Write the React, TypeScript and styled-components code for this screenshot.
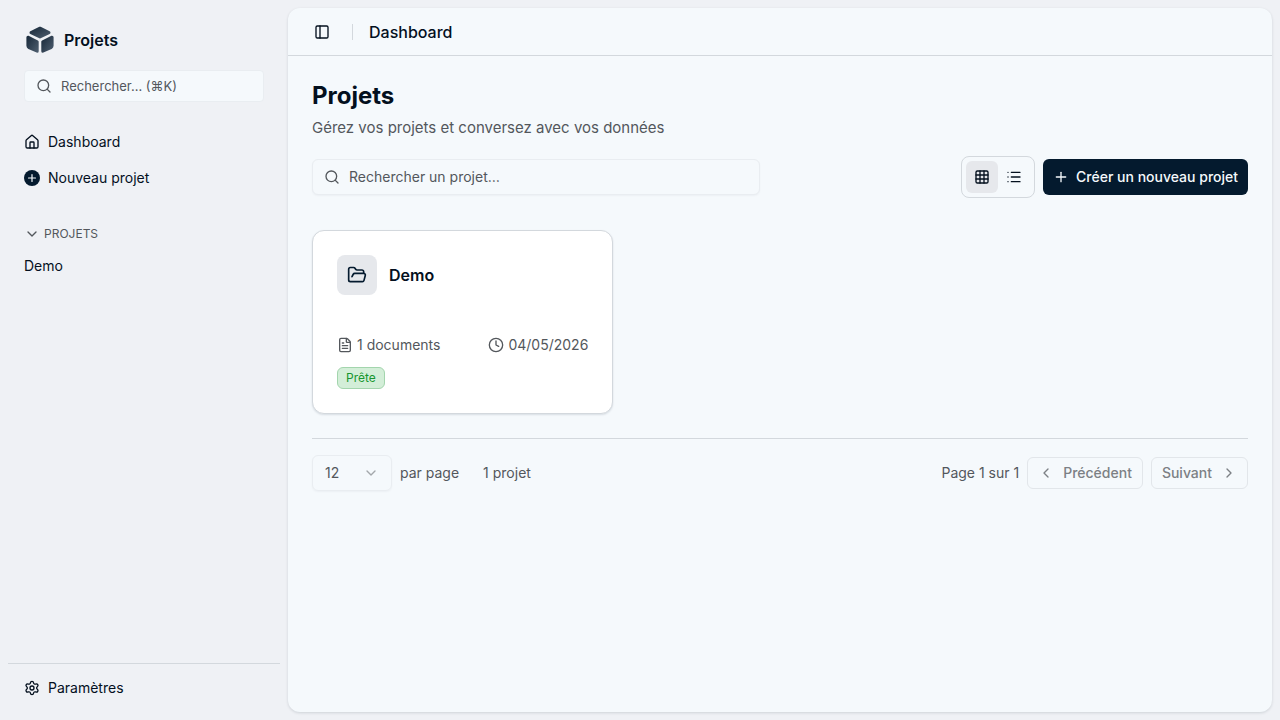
import React from "react";
import styled, { createGlobalStyle, css } from "styled-components";
import {
  ChevronDown, ChevronLeft, ChevronRight, Clock, FileText, FolderOpen,
  Grid3x3, House, List, PanelLeft, Plus, Search, Settings,
} from "lucide-react";

const color = {
  canvas: "#eff1f5",
  surface: "#f5f9fc",
  ink: "#04101e",
  primary: "#041a2e",
  muted: "#53575c",
  line: "#d3d8dd",
  faint: "#e9edf1",
  tint: "#e6e8ec",
};

const GlobalStyle = createGlobalStyle`
  *, *::before, *::after { box-sizing: border-box; }
  body {
    margin: 0;
    background: ${color.canvas};
    color: ${color.ink};
    font: 400 14px/20px Inter, "Liberation Sans", sans-serif;
  }
  button, input, select { font: inherit; color: inherit; margin: 0; }
  button { cursor: pointer; }
  a { color: inherit; text-decoration: none; }
  h1, h2, p, ul { margin: 0; padding: 0; }
  ul { list-style: none; }
  svg { flex: none; display: block; }
`;

const Shell = styled.div`
  display: flex;
  min-height: 100vh;
`;

const Sidebar = styled.aside`
  flex: none;
  width: 288px;
  padding: 8px;
  display: flex;
  flex-direction: column;
`;

const SidebarTop = styled.div`
  padding: 16px;
  display: flex;
  flex-direction: column;
  gap: 14px;
`;

const Brand = styled.a`
  display: flex;
  align-items: center;
  gap: 8px;
  height: 32px;
  font-size: 16px;
  font-weight: 600;
`;

const SearchField = styled.label<{ $compact?: boolean }>`
  display: flex;
  align-items: center;
  gap: 9px;
  height: ${(p) => (p.$compact ? 32 : 36)}px;
  padding: 0 11px;
  border: 1px solid ${color.faint};
  border-radius: ${(p) => (p.$compact ? 4 : 6)}px;
  background: ${color.surface};
  color: ${color.muted};
  ${(p) =>
    p.$compact
      ? css`
          font-size: 13px;
        `
      : css`
          flex: 0 1 448px;
          box-shadow: 0 1px 2px rgba(4, 26, 46, 0.04);
        `}
`;

const SearchInput = styled.input`
  flex: 1;
  min-width: 0;
  padding: 0;
  border: 0;
  outline: 0;
  background: none;
  &::placeholder { color: ${color.muted}; opacity: 1; }
`;

const Nav = styled.nav`
  flex: 1;
  padding: 8px 8px 0;
`;

const NavList = styled.ul`
  display: flex;
  flex-direction: column;
  gap: 4px;
`;

const NavLink = styled.a`
  display: flex;
  align-items: center;
  gap: 8px;
  height: 32px;
  padding: 0 8px;
  border-radius: 6px;
`;

const GroupToggle = styled.button`
  display: flex;
  align-items: center;
  gap: 4px;
  width: 100%;
  height: 32px;
  margin-top: 24px;
  padding: 0 8px;
  border: 0;
  background: none;
  color: ${color.muted};
  font-size: 12px;
  line-height: 16px;
`;

const SidebarFooter = styled.footer`
  padding: 8px;
  border-top: 1px solid ${color.line};
`;

const Panel = styled.main`
  flex: 1;
  min-width: 0;
  margin: 8px 8px 8px 0;
  border-radius: 12px;
  background: ${color.surface};
  box-shadow: 0 1px 3px rgba(4, 26, 46, 0.14);
`;

const TopBar = styled.header`
  display: flex;
  align-items: center;
  gap: 16px;
  height: 48px;
  padding: 0 20px;
  border-bottom: 1px solid ${color.line};
  font-size: 16px;
  line-height: 24px;
  font-weight: 500;
`;

const IconButton = styled.button<{ $active?: boolean; $size?: number }>`
  display: grid;
  place-items: center;
  width: ${(p) => p.$size ?? 32}px;
  height: ${(p) => p.$size ?? 32}px;
  padding: 0;
  border: 0;
  border-radius: 6px;
  background: ${(p) => (p.$active ? color.tint : "transparent")};
`;

const Divider = styled.span`
  width: 1px;
  height: 16px;
  background: ${color.line};
`;

const Content = styled.div`
  padding: 24px;
`;

const Title = styled.h1`
  font-size: 24px;
  line-height: 32px;
  font-weight: 700;
`;

const Lead = styled.p`
  margin-top: 4px;
  color: ${color.muted};
  font-size: 15px;
  line-height: 24px;
`;

const Toolbar = styled.div`
  display: flex;
  align-items: center;
  justify-content: space-between;
  gap: 16px;
  margin-top: 16px;
`;

const Actions = styled.div`
  display: flex;
  align-items: center;
  gap: 8px;
`;

const ViewSwitch = styled.div`
  display: flex;
  padding: 4px;
  border: 1px solid ${color.line};
  border-radius: 8px;
`;

const PrimaryButton = styled.button`
  display: flex;
  align-items: center;
  gap: 7px;
  height: 36px;
  padding: 0 10px;
  border: 0;
  border-radius: 6px;
  background: ${color.primary};
  color: ${color.surface};
  font-weight: 500;
  white-space: nowrap;
`;

const CardGrid = styled.div`
  display: grid;
  grid-template-columns: repeat(3, minmax(0, 1fr));
  gap: 16px;
  margin-top: 32px;
`;

const Card = styled.article`
  padding: 24px;
  border: 1px solid ${color.line};
  border-radius: 12px;
  background: #fff;
  box-shadow: 0 1px 2px rgba(4, 26, 46, 0.12);
`;

const CardHead = styled.div`
  display: flex;
  align-items: center;
  gap: 12px;
`;

const CardIcon = styled.span`
  display: grid;
  place-items: center;
  width: 40px;
  height: 40px;
  border-radius: 8px;
  background: ${color.tint};
  color: ${color.primary};
`;

const CardTitle = styled.h2`
  font-size: 16px;
  line-height: 24px;
  font-weight: 600;
`;

const CardMeta = styled.div`
  display: flex;
  justify-content: space-between;
  margin-top: 40px;
  color: ${color.muted};
`;

const MetaItem = styled.span`
  display: flex;
  align-items: center;
  gap: 4px;
`;

const Badge = styled.span`
  display: inline-block;
  margin-top: 12px;
  padding: 2px 8px;
  border: 1px solid #a3d5ad;
  border-radius: 6px;
  background: #d3eed8;
  color: #17962f;
  font-size: 12px;
  line-height: 16px;
  vertical-align: top;
`;

const Pagination = styled.footer`
  display: flex;
  align-items: center;
  justify-content: space-between;
  margin-top: 24px;
  padding-top: 16px;
  border-top: 1px solid ${color.line};
  color: ${color.muted};
`;

const PageSize = styled.label`
  display: flex;
  align-items: center;
  gap: 8px;
`;

const SelectBox = styled.span`
  display: grid;
  align-items: center;
  width: 80px;
  height: 36px;
  border: 1px solid ${color.faint};
  border-radius: 6px;
  box-shadow: 0 1px 2px rgba(4, 26, 46, 0.04);
  > * { grid-area: 1 / 1; }
  > svg {
    justify-self: end;
    margin-right: 12px;
    opacity: 0.5;
    pointer-events: none;
  }
`;

const Select = styled.select`
  width: 100%;
  height: 100%;
  padding: 0 12px;
  border: 0;
  background: none;
  appearance: none;
`;

const PagerGroup = styled.div<{ $gap: number }>`
  display: flex;
  align-items: center;
  gap: ${(p) => p.$gap}px;
`;

const PagerButton = styled.button`
  display: flex;
  align-items: center;
  gap: 9px;
  height: 32px;
  padding: 0 10px;
  border: 1px solid #e2e6ea;
  border-radius: 6px;
  background: none;
  color: #7c8085;
  font-weight: 500;
`;

const Logo = () => (
  <svg width="32" height="32" viewBox="0 0 32 32" aria-hidden="true">
    <defs>
      <linearGradient id="face" x1="0" y1="0" x2="1" y2="1">
        <stop offset="0" stopColor="#1c2d3e" />
        <stop offset="1" stopColor="#4a5a6b" />
      </linearGradient>
    </defs>
    <g fill="url(#face)" stroke="url(#face)" strokeWidth="3" strokeLinejoin="round">
      <path d="M16 4.2 25 8.6 16 13 7 8.6Z" />
      <path d="M3.9 13.2 13.2 17.8V27.2L5 23.6Q3.9 23 3.9 21.8Z" />
      <path d="M28.1 13.2 18.8 17.8V27.2L27 23.6Q28.1 23 28.1 21.8Z" />
    </g>
  </svg>
);

const PlusDisc = () => (
  <svg width="16" height="16" viewBox="0 0 16 16" aria-hidden="true">
    <circle cx="8" cy="8" r="8" fill={color.primary} />
    <path d="M8 4.5v7M4.5 8h7" stroke={color.surface} strokeWidth="1.2" strokeLinecap="round" />
  </svg>
);

export default function App() {
  return (
    <>
      <GlobalStyle />
      <Shell>
        <Sidebar>
          <SidebarTop>
            <Brand href="#"><Logo />Projets</Brand>
            <SearchField $compact>
              <Search size={16} />
              <SearchInput aria-label="Rechercher" placeholder="Rechercher… (⌘K)" />
            </SearchField>
          </SidebarTop>
          <Nav>
            <NavList>
              <li><NavLink href="#"><House size={16} />Dashboard</NavLink></li>
              <li><NavLink href="#"><PlusDisc />Nouveau projet</NavLink></li>
            </NavList>
            <GroupToggle aria-expanded="true"><ChevronDown size={16} />PROJETS</GroupToggle>
            <NavList>
              <li><NavLink href="#">Demo</NavLink></li>
            </NavList>
          </Nav>
          <SidebarFooter>
            <NavLink href="#"><Settings size={16} />Paramètres</NavLink>
          </SidebarFooter>
        </Sidebar>
        <Panel>
          <TopBar>
            <IconButton $size={28} aria-label="Menu latéral"><PanelLeft size={16} /></IconButton>
            <Divider />
            Dashboard
          </TopBar>
          <Content>
            <Title>Projets</Title>
            <Lead>Gérez vos projets et conversez avec vos données</Lead>
            <Toolbar>
              <SearchField>
                <Search size={16} />
                <SearchInput aria-label="Rechercher un projet" placeholder="Rechercher un projet…" />
              </SearchField>
              <Actions>
                <ViewSwitch>
                  <IconButton $active aria-label="Grille"><Grid3x3 size={16} /></IconButton>
                  <IconButton aria-label="Liste"><List size={16} /></IconButton>
                </ViewSwitch>
                <PrimaryButton><Plus size={16} />Créer un nouveau projet</PrimaryButton>
              </Actions>
            </Toolbar>
            <CardGrid>
              <Card>
                <CardHead>
                  <CardIcon><FolderOpen size={20} /></CardIcon>
                  <CardTitle>Demo</CardTitle>
                </CardHead>
                <CardMeta>
                  <MetaItem><FileText size={16} />1 documents</MetaItem>
                  <MetaItem><Clock size={16} />04/05/2026</MetaItem>
                </CardMeta>
                <Badge>Prête</Badge>
              </Card>
            </CardGrid>
            <Pagination>
              <PagerGroup $gap={24}>
                <PageSize>
                  <SelectBox>
                    <Select defaultValue="12">
                      <option>12</option>
                      <option>24</option>
                      <option>48</option>
                    </Select>
                    <ChevronDown size={16} />
                  </SelectBox>
                  par page
                </PageSize>
                <span>1 projet</span>
              </PagerGroup>
              <PagerGroup $gap={8}>
                <span>Page 1 sur 1</span>
                <PagerButton disabled><ChevronLeft size={16} />Précédent</PagerButton>
                <PagerButton disabled>Suivant<ChevronRight size={16} /></PagerButton>
              </PagerGroup>
            </Pagination>
          </Content>
        </Panel>
      </Shell>
    </>
  );
}
